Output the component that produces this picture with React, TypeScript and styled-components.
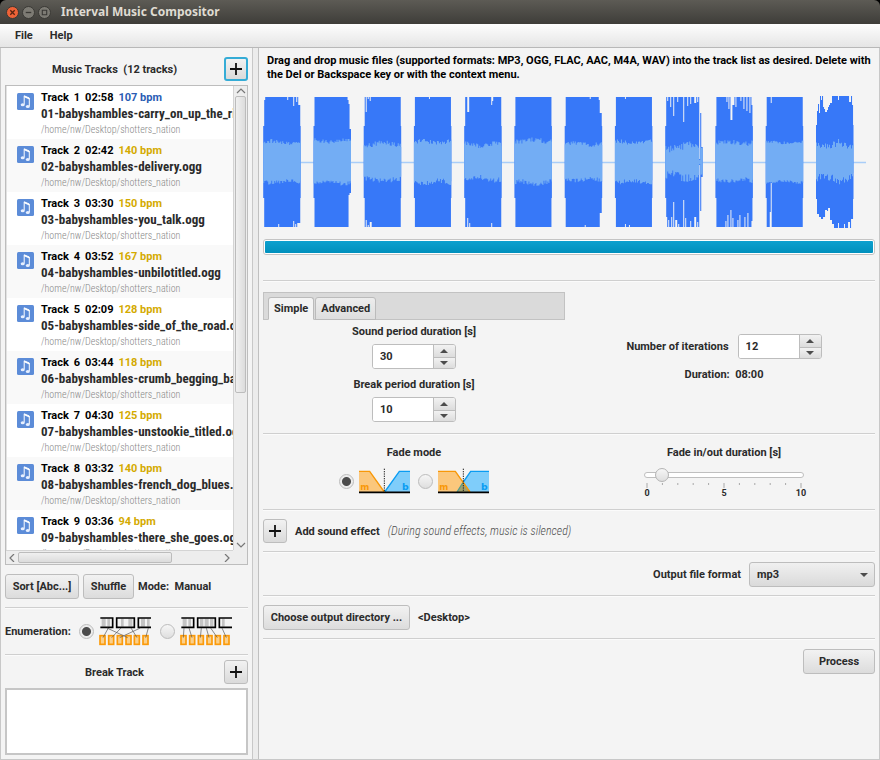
import React, { useState } from "react";
import styled, { createGlobalStyle, css } from "styled-components";

const GlobalStyle = createGlobalStyle`
  * { box-sizing: border-box; }
  body { margin: 0; background: #f4f4f4; }
  body, button, input, select {
    font-family: Roboto, "Liberation Sans", sans-serif;
    font-size: 11px;
    font-weight: 700;
    color: #2b2b2b;
  }
  button, input, select { margin: 0; }
`;

const condensed = css`
  font-family: "Roboto Condensed", "Liberation Sans Narrow", Roboto, sans-serif;
`;

const Window = styled.div`
  display: flex;
  flex-direction: column;
  height: 100vh;
  background: #000;
`;

const TitleBar = styled.header`
  display: flex;
  align-items: center;
  flex: none;
  gap: 3px;
  height: 24px;
  padding: 0 6px;
  border-radius: 6px 6px 0 0;
  background: linear-gradient(#5d5b55, #3e3d39);
`;

const WindowButton = styled.button<{ $close?: boolean }>`
  display: flex;
  width: 13px;
  height: 13px;
  padding: 0;
  border: 1px solid #3a3935;
  border-radius: 50%;
  background: ${(p) => (p.$close ? "#ee6237" : "#7d7b74")};
`;

const Title = styled.h1`
  margin: 0 0 0 7px;
  font: 700 12px/16px "Noto Sans", sans-serif;
  color: #dfdbd2;
`;

const MenuBar = styled.nav`
  display: flex;
  flex: none;
  gap: 17px;
  height: 24px;
  padding: 0 15px;
  border-bottom: 1px solid #b8b8b8;
  background: linear-gradient(#fdfdfd, #e5e5e5);
`;

const MenuItem = styled.button`
  padding: 0;
  border: 0;
  background: none;
`;

const Body = styled.div`
  display: grid;
  flex: 1;
  grid-template-columns: 253px 6px minmax(0, 1fr);
  min-height: 0;
  border-bottom: 1px solid #c8c8c8;
`;

const Sidebar = styled.aside`
  display: flex;
  flex-direction: column;
  min-height: 0;
  padding: 9px 4px 4px;
  border: solid #c8c8c8;
  border-width: 0 1px;
  background: #f4f4f4;
`;

const Splitter = styled.div`
  border-right: 1px solid #c0c0c0;
  background: #ececec;
`;

const Main = styled.main`
  padding: 6px 4px;
  border-right: 1px solid #c8c8c8;
  background: #f4f4f4;
`;

const SideHeader = styled.div`
  display: flex;
  align-items: center;
  flex: none;
  height: 24px;
`;

const SideTitle = styled.h2`
  flex: 1;
  margin: 0;
  font-size: 11px;
  text-align: center;
  white-space: pre;
`;

const Button = styled.button<{ $width?: number }>`
  height: 25px;
  width: ${(p) => (p.$width ? `${p.$width}px` : "auto")};
  padding: 0;
  border: 1px solid #bdbdbd;
  border-radius: 3px;
  background: linear-gradient(#f2f2f2, #dcdcdc);
  white-space: nowrap;
`;

const PlusButton = styled.button<{ $focused?: boolean }>`
  display: flex;
  align-items: center;
  justify-content: center;
  flex: none;
  width: 24px;
  height: 24px;
  padding: 0;
  border: ${(p) => (p.$focused ? "2px solid #35acd6" : "1px solid #bdbdbd")};
  border-radius: 3px;
  background: linear-gradient(#f2f2f2, #dadada);
`;

const ListFrame = styled.div`
  display: grid;
  flex: 1;
  grid-template-columns: minmax(0, 1fr) 14px;
  grid-template-rows: minmax(0, 1fr) 14px;
  min-height: 0;
  margin-top: 4px;
  border: 1px solid #bdbdbd;
  background: #ededed;
`;

const TrackList = styled.ul`
  overflow: hidden;
  margin: 0;
  padding: 0;
  border-left: 1px solid #e2e2e2;
  background: #fff;
  list-style: none;
`;

const TrackRow = styled.li`
  display: flex;
  gap: 7px;
  height: 53px;
  padding: 4px 0 0 10px;
  background: #fff;
  white-space: nowrap;
  &:nth-child(even) { background: #f9f9f9; }
`;

const NoteIcon = styled.svg`
  flex: none;
  width: 17px;
  height: 17px;
  margin-top: 3px;
`;

const TrackHead = styled.div`
  display: flex;
  gap: 5px;
  color: #000;
  font-size: 11px;
  line-height: 16px;
`;

const Bpm = styled.span<{ $slow?: boolean }>`
  color: ${(p) => (p.$slow ? "#2a5cb4" : "#d4aa00")};
`;

const FileName = styled.div`
  ${condensed}
  font-size: 13px;
  line-height: 16px;
`;

const FilePath = styled.div`
  ${condensed}
  color: #888;
  font-size: 10px;
  font-weight: 300;
  line-height: 15px;
`;

const ScrollBar = styled.div<{ $row?: boolean }>`
  display: flex;
  flex-direction: ${(p) => (p.$row ? "row" : "column")};
  align-items: center;
  justify-content: space-between;
  padding: ${(p) => (p.$row ? "0 1px" : "1px 0")};
  border: solid #d4d4d4;
  border-width: ${(p) => (p.$row ? "1px 0 0" : "0 0 0 1px")};
`;

const ScrollTrack = styled.div`
  display: flex;
  flex: 1;
  align-self: stretch;
  padding: 1px;
`;

const ScrollThumb = styled.div<{ $row?: boolean }>`
  width: ${(p) => (p.$row ? "76%" : "100%")};
  height: ${(p) => (p.$row ? "100%" : "67%")};
  border: 1px solid #bcbcbc;
  border-radius: 2px;
  background: linear-gradient(${(p) => (p.$row ? "180deg" : "90deg")}, #f0f0f0, #dcdcdc);
`;

const ActionRow = styled.div`
  display: flex;
  align-items: center;
  flex: none;
  gap: 4px;
  margin-top: 9px;
`;

const Rule = styled.hr<{ $above?: number; $below?: number }>`
  flex: none;
  width: 100%;
  height: 2px;
  margin: ${(p) => p.$above ?? 8}px 0 ${(p) => p.$below ?? 8}px;
  border: 0;
  border-top: 1px solid #cfcfcf;
  background: #fbfbfb;
`;

const RadioRow = styled.div`
  display: flex;
  align-items: center;
  flex: none;
  gap: 8px;
`;

const RadioLabel = styled.label`
  display: flex;
  align-items: center;
  gap: 5px;
`;

const Radio = styled.input`
  appearance: none;
  width: 15px;
  height: 15px;
  border: 1px solid #bcbcbc;
  border-radius: 50%;
  background: linear-gradient(#f6f6f6, #dedede);
  &:checked {
    background: radial-gradient(circle, #4c4c4c 0 4px, #ececec 5px);
  }
`;

const BreakBox = styled.div`
  flex: none;
  height: 67px;
  margin-top: 4px;
  border: 2px solid #c6c6c6;
  background: #fff;
`;

const Hint = styled.p`
  margin: 0 4px;
  color: #000;
  line-height: 14px;
`;

const WaveSvg = styled.svg`
  display: block;
  width: 100%;
  height: 136px;
  margin-top: 13px;
`;

const Progress = styled.div`
  height: 16px;
  margin-top: 8px;
  padding: 1px;
  border: 1px solid #c4c4c4;
  border-radius: 3px;
  background: #fff;
`;

const ProgressFill = styled.div`
  height: 100%;
  border-radius: 1px;
  background: linear-gradient(#0da0cf, #0090bd);
`;

const Columns = styled.div`
  display: grid;
  grid-template-columns: 1fr 1fr;
  gap: 8px;
`;

const TabBar = styled.div`
  display: flex;
  align-items: flex-end;
  gap: 1px;
  height: 28px;
  padding: 0 4px;
  border: 1px solid #c2c2c2;
  background: #dadada;
`;

const Tab = styled.button<{ $active?: boolean }>`
  height: 23px;
  margin-bottom: -1px;
  padding: 0 5px;
  border: 1px solid #bbb;
  border-bottom-color: ${(p) => (p.$active ? "#f4f4f4" : "#bbb")};
  border-radius: 3px 3px 0 0;
  background: ${(p) => (p.$active ? "#f4f4f4" : "linear-gradient(#ededed, #dedede)")};
`;

const Fields = styled.div`
  display: flex;
  flex-direction: column;
  align-items: center;
  gap: 8px;
  padding: 4px 0 3px;
`;

const Field = styled.div`
  display: flex;
  flex-direction: column;
  align-items: center;
  gap: 4px;
`;

const InlineField = styled.div`
  display: flex;
  align-items: center;
  gap: 9px;
`;

const FieldLabel = styled.label`
  line-height: 16px;
`;

const SpinnerBox = styled.div`
  display: flex;
  width: 84px;
  height: 25px;
  overflow: hidden;
  border: 1px solid #bdbdbd;
  border-radius: 3px;
  background: #fff;
`;

const SpinnerInput = styled.input`
  flex: 1;
  min-width: 0;
  padding: 0 7px;
  border: 0;
  outline: 0;
`;

const SpinnerButtons = styled.div`
  display: grid;
  grid-template-rows: 1fr 1fr;
  width: 22px;
  border-left: 1px solid #bdbdbd;
`;

const Step = styled.button`
  display: flex;
  align-items: center;
  justify-content: center;
  padding: 0;
  border: 0;
  background: linear-gradient(#f2f2f2, #dcdcdc);
  & + & { border-top: 1px solid #bdbdbd; }
`;

const RightColumn = styled.div`
  display: flex;
  flex-direction: column;
  align-items: center;
  padding-top: 42px;
`;

const Duration = styled.p`
  margin: 8px 0 0;
  line-height: 16px;
  white-space: pre;
`;

const FadeCell = styled.div`
  display: flex;
  flex-direction: column;
  align-items: center;
  gap: 9px;
  padding: 3px 0 2px;
`;

const SliderBox = styled.div`
  width: 160px;
`;

const SliderTop = styled.div`
  display: grid;
  align-items: center;
  & > * { grid-area: 1 / 1; }
`;

const Rail = styled.div`
  height: 6px;
  border: 1px solid #bfbfbf;
  border-radius: 3px;
  background: #fff;
`;

const Slider = styled.input`
  display: block;
  appearance: none;
  width: 168px;
  height: 14px;
  margin: 0 -4px;
  background: none;
  &::-webkit-slider-thumb {
    appearance: none;
    width: 14px;
    height: 14px;
    border: 1px solid #b4b4b4;
    border-radius: 50%;
    background: linear-gradient(#f6f6f6, #dedede);
  }
`;

const Ticks = styled.svg`
  display: block;
  width: 100%;
  height: 6px;
`;

const Scale = styled.div`
  display: grid;
  grid-template-columns: 12px 1fr 12px;
  margin: 0 -3px;
  font-size: 9px;
  line-height: 11px;
  text-align: center;
`;

const EffectNote = styled.em`
  ${condensed}
  color: #505050;
  font-size: 12px;
  font-weight: 300;
`;

const Line = styled.div<{ $end?: boolean }>`
  display: flex;
  align-items: center;
  justify-content: ${(p) => (p.$end ? "flex-end" : "flex-start")};
  gap: 8px;
`;

const SelectBox = styled.div`
  display: grid;
  align-items: center;
  & > * { grid-area: 1 / 1; }
  & > svg { justify-self: end; margin-right: 7px; pointer-events: none; }
`;

const Select = styled.select`
  appearance: none;
  width: 126px;
  height: 25px;
  padding: 0 7px;
  border: 1px solid #bdbdbd;
  border-radius: 3px;
  background: linear-gradient(#f0f0f0, #dadada);
`;

type Track = { file: string; time: string; bpm: number };

const tracks: Track[] = [
  { file: "01-babyshambles-carry_on_up_the_rising.ogg", time: "02:58", bpm: 107 },
  { file: "02-babyshambles-delivery.ogg", time: "02:42", bpm: 140 },
  { file: "03-babyshambles-you_talk.ogg", time: "03:30", bpm: 150 },
  { file: "04-babyshambles-unbilotitled.ogg", time: "03:52", bpm: 167 },
  { file: "05-babyshambles-side_of_the_road.ogg", time: "02:09", bpm: 128 },
  { file: "06-babyshambles-crumb_begging_baghead.ogg", time: "03:44", bpm: 118 },
  { file: "07-babyshambles-unstookie_titled.ogg", time: "04:30", bpm: 125 },
  { file: "08-babyshambles-french_dog_blues.ogg", time: "03:32", bpm: 140 },
  { file: "09-babyshambles-there_she_goes.ogg", time: "03:36", bpm: 94 },
];

/* A notch is [offset from the block's start, width, depth]. */
type Notch = [number, number, number];
type Block = { amp: number; vary: number; top: Notch[]; bottom: Notch[]; over?: number };

const blocks: Block[] = [
  { amp: 19, vary: 4, top: [[0, 2, 3], [24, 1, 3], [30, 1, 9], [33, 1, 5], [35, 2, 8]], bottom: [[15, 1, 3], [30, 1, 6], [32, 1, 3], [34, 3, 4]] },
  { amp: 20, vary: 4, top: [[34, 1, 3], [35, 1, 7], [36, 2, 32]], bottom: [[35, 1, 32], [36, 2, 34]] },
  { amp: 17, vary: 5, top: [[0, 1, 4], [2, 1, 15], [4, 1, 2], [6, 1, 4]], bottom: [[0, 1, 5], [2, 1, 7], [4, 1, 2], [6, 2, 5]] },
  { amp: 19, vary: 5, top: [[15, 1, 2]], bottom: [] },
  { amp: 16, vary: 5, top: [[0, 1, 8], [3, 2, 15], [27, 1, 8], [28, 1, 4]], bottom: [[0, 1, 2], [3, 1, 9], [5, 1, 4], [27, 1, 4]] },
  { amp: 20, vary: 5, top: [], bottom: [] },
  { amp: 17, vary: 4, top: [[25, 1, 2], [34, 1, 3], [35, 2, 16]], bottom: [[20, 1, 2], [35, 2, 14]] },
  { amp: 19, vary: 4, top: [[10, 1, 2]], bottom: [[10, 1, 3], [14, 1, 2]] },
  { amp: 13, vary: 8, top: [[0, 1, 8], [2, 1, 4], [5, 1, 10], [8, 1, 19], [12, 1, 5], [18, 1, 25], [22, 1, 9], [25, 1, 7], [29, 2, 6], [32, 1, 5], [34, 1, 62], [35, 1, 16], [36, 2, 50]], bottom: [[0, 2, 10], [3, 1, 7], [6, 1, 10], [8, 1, 25], [10, 2, 7], [13, 1, 3], [18, 1, 27], [20, 1, 9], [25, 1, 6], [29, 2, 10], [32, 1, 5], [34, 1, 62], [35, 1, 16], [36, 2, 50]] },
  { amp: 18, vary: 5, top: [[11, 1, 5], [13, 1, 12], [15, 2, 23], [17, 2, 8], [20, 1, 10], [25, 1, 4], [28, 1, 12], [31, 1, 14], [34, 1, 16], [36, 1, 8]], bottom: [[10, 1, 6], [12, 1, 12], [15, 1, 17], [17, 1, 9], [22, 1, 7], [24, 1, 12], [29, 1, 10], [32, 1, 14], [36, 1, 6]] },
  { amp: 19, vary: 3, top: [[5, 1, 6]], bottom: [[4, 1, 15], [5, 1, 44]] },
  { amp: 15, vary: 8, over: 1, top: [[0, 2, 15], [2, 1, 8], [3, 1, 17], [5, 1, 4], [7, 1, 11], [8, 1, 13], [9, 2, 16], [11, 1, 14], [12, 1, 11], [13, 1, 9], [14, 2, 7], [22, 1, 4], [33, 2, 6], [36, 2, 9]], bottom: [[0, 1, 22], [1, 2, 14], [3, 2, 11], [5, 2, 9], [7, 2, 11], [9, 2, 18], [11, 1, 17], [12, 2, 20], [14, 2, 8], [16, 2, 4], [22, 1, 5], [28, 1, 4], [32, 2, 6], [35, 2, 9]] },
];

const MID = 67;

function notchDepth(list: Notch[], x: number) {
  return list.reduce((d, [at, w, depth]) => (x >= at && x < at + w ? Math.max(d, depth) : d), 0);
}

function wavePaths(block: Block, index: number) {
  const start = index * 50.25 + 0.2;
  let seed = index * 977 + 131;
  const random = () => {
    seed = (seed * 1103515245 + 12345) % 2147483648;
    return seed / 2147483648;
  };
  let loud = "";
  let soft = "";
  for (let i = 0; i < 38; i += 1) {
    const x = (start + i).toFixed(1);
    const full = 65 + (block.over ?? 0);
    const edge = i === 0 || i === 37 ? 29 : 0;
    const up = Math.max(2, full - Math.max(edge, notchDepth(block.top, i)));
    const down = Math.max(2, full - Math.max(edge, notchDepth(block.bottom, i)));
    const width = i === 37 ? 0.5 : 1.05;
    loud += `M${x} ${MID - up}h${width}v${up + down}h-${width}z`;
    const wander = Math.sin(i / 5 + index * 2) * block.vary * 0.25;
    const a = Math.min(up - 1, block.amp + wander + random() * block.vary - block.vary / 4);
    const b = Math.min(down - 1, block.amp + wander + random() * block.vary - block.vary / 3);
    soft += `M${x} ${(MID - a).toFixed(1)}h${width}v${(a + b).toFixed(1)}h-${width}z`;
  }
  return { loud, soft };
}

function Waveform() {
  return (
    <WaveSvg viewBox="0 0 612 136" preserveAspectRatio="none" aria-label="Waveform">
      <path d="M0 67.5H603" stroke="#a9cdf8" strokeWidth="1.4" />
      {blocks.map((block, i) => {
        const { loud, soft } = wavePaths(block, i);
        return (
          <g key={i}>
            <path d={loud} fill="#3778f8" />
            <path d={soft} fill="#73adf4" />
          </g>
        );
      })}
    </WaveSvg>
  );
}

function Plus() {
  return (
    <svg width="14" height="14" viewBox="0 0 14 14" aria-hidden="true">
      <path d="M7 1v12M1 7h12" stroke="#111" strokeWidth="1.8" />
    </svg>
  );
}

function Note() {
  return (
    <NoteIcon viewBox="0 0 17 17" aria-hidden="true">
      <rect width="17" height="17" rx="1.5" fill="#5c8cd8" />
      <path d="M7.2 11.5V2.8L12.3 5v8" fill="none" stroke="#fff" strokeWidth="1" />
      <path d="M7.2 2.8l5.1 2.2v1.5l-5.1-2.2z" fill="#fff" />
      <ellipse cx="5.7" cy="11.8" rx="2" ry="1.5" fill="#e8f0ff" />
      <ellipse cx="10.8" cy="13.5" rx="2" ry="1.5" fill="#e8f0ff" />
    </NoteIcon>
  );
}

const chevrons = {
  up: "M1 6l4-4 4 4",
  down: "M1 2l4 4 4-4",
  left: "M7 0L3 4l4 4",
  right: "M3 0l4 4-4 4",
};

function Chevron({ to }: { to: keyof typeof chevrons }) {
  return (
    <svg width="10" height="8" viewBox="0 0 10 8" aria-hidden="true">
      <path d={chevrons[to]} fill="none" stroke="#777" strokeWidth="1.2" />
    </svg>
  );
}

function Triangle({ down }: { down?: boolean }) {
  return (
    <svg width="8" height="4" viewBox="0 0 8 4" aria-hidden="true">
      <path d={down ? "M0 0h8L4 4z" : "M0 4h8L4 0z"} fill="#4c4c4c" />
    </svg>
  );
}

type Link = [number, number];

function EnumerationIcon({ links, stripes }: { links: Link[]; stripes: Link[] }) {
  return (
    <svg width="53" height="30" viewBox="0 0 159 90" aria-hidden="true">
      {stripes.map(([x, w]) => (
        <rect key={x} x={x} y="8" width={w} height="24" fill="#c4c4c4" />
      ))}
      <g fill="none" stroke="#000" strokeWidth="5">
        <path d="M4 6h37v28H4M53 6h53v28H53zM156 6h-38v28h38" />
      </g>
      {[3, 29, 55, 81, 106, 132].map((x) => (
        <rect key={x} x={x} y="59" width="15" height="26" fill="#fbd08b" stroke="#fb9a09" strokeWidth="5" />
      ))}
      <g stroke="#555" strokeWidth="2">
        {links.map(([from, to]) => (
          <path key={from} d={`M${from} 36L${to} 65`} />
        ))}
      </g>
    </svg>
  );
}

function FadeIcon({ cross }: { cross?: boolean }) {
  const o = cross ? 20 : 0;
  return (
    <svg width="51" height="26" viewBox="0 0 153 78" aria-hidden="true">
      <path d={`M0 10H${cross ? 52 : 32}L${76 + o} 72H0z`} fill="#fbc77c" />
      <path d={`M153 10H${cross ? 98 : 121}L${77 - o} 72H153z`} fill="#7fcdfa" />
      {cross && <path d="M76 41L97 72H57z" fill="#a2a06c" />}
      {cross && <path d="M57 72L76 42" stroke="#549c8c" strokeWidth="4" />}
      <path d={`M153 10H${cross ? 98 : 121}L${cross ? 76 : 77} ${cross ? 42 : 72}`} fill="none" stroke="#0a9cf2" strokeWidth="4" />
      <path d={`M0 10H${cross ? 52 : 32}L${76 + o} 72`} fill="none" stroke="#f89808" strokeWidth="4" />
      <path d="M76 2V72" stroke="#222" strokeWidth="3" strokeDasharray="4 3" />
      <path d="M0 73H153" stroke="#000" strokeWidth="5" />
      <text x="4" y="66" fill="#f89808" fontFamily="DejaVu Sans" fontWeight="700" fontSize="26">m</text>
      <text x="129" y="66" fill="#0a9cf2" fontFamily="DejaVu Sans" fontWeight="700" fontSize="28">b</text>
    </svg>
  );
}

function Spinner({ id, initial }: { id: string; initial: number }) {
  const [value, setValue] = useState(initial);
  return (
    <SpinnerBox>
      <SpinnerInput id={id} value={value} inputMode="numeric" onChange={(e) => setValue(Number(e.target.value) || 0)} />
      <SpinnerButtons>
        <Step aria-label="Increase" onClick={() => setValue(value + 1)}><Triangle /></Step>
        <Step aria-label="Decrease" onClick={() => setValue(value - 1)}><Triangle down /></Step>
      </SpinnerButtons>
    </SpinnerBox>
  );
}

export default function App() {
  return (
    <>
      <GlobalStyle />
      <Window>
        <TitleBar>
          <WindowButton $close aria-label="Close">
            <svg viewBox="0 0 10 10"><path d="M3 3l4 4M7 3L3 7" stroke="#5a2410" strokeWidth="1.2" /></svg>
          </WindowButton>
          <WindowButton aria-label="Minimize">
            <svg viewBox="0 0 10 10"><path d="M2.5 5h5" stroke="#3a3935" strokeWidth="1.2" /></svg>
          </WindowButton>
          <WindowButton aria-label="Maximize">
            <svg viewBox="0 0 10 10"><path d="M3 3h4v4H3z" fill="none" stroke="#3a3935" /></svg>
          </WindowButton>
          <Title>Interval Music Compositor</Title>
        </TitleBar>
        <MenuBar>
          <MenuItem>File</MenuItem>
          <MenuItem>Help</MenuItem>
        </MenuBar>
        <Body>
          <Sidebar>
            <SideHeader>
              <SideTitle>{"Music Tracks  (12 tracks)"}</SideTitle>
              <PlusButton $focused aria-label="Add music track"><Plus /></PlusButton>
            </SideHeader>
            <ListFrame>
              <TrackList>
                {tracks.map((t, i) => (
                  <TrackRow key={t.file}>
                    <Note />
                    <div>
                      <TrackHead>
                        <span>Track</span>
                        <span>{i + 1}</span>
                        <span>{t.time}</span>
                        <Bpm $slow={i === 0}>{t.bpm} bpm</Bpm>
                      </TrackHead>
                      <FileName>{t.file}</FileName>
                      <FilePath>/home/nw/Desktop/shotters_nation</FilePath>
                    </div>
                  </TrackRow>
                ))}
              </TrackList>
              <ScrollBar>
                <Chevron to="up" />
                <ScrollTrack><ScrollThumb /></ScrollTrack>
                <Chevron to="down" />
              </ScrollBar>
              <ScrollBar $row>
                <Chevron to="left" />
                <ScrollTrack><ScrollThumb $row /></ScrollTrack>
                <Chevron to="right" />
              </ScrollBar>
            </ListFrame>
            <ActionRow>
              <Button $width={74}>Sort [Abc...]</Button>
              <Button $width={51}>Shuffle</Button>
              <span>Mode:&nbsp; Manual</span>
            </ActionRow>
            <Rule $below={7} />
            <RadioRow>
              <span>Enumeration:</span>
              <RadioLabel>
                <Radio type="radio" name="enumeration" defaultChecked aria-label="Mixed order" />
                <EnumerationIcon
                  stripes={[[8, 12], [25, 8], [66, 8], [88, 12], [126, 12], [144, 8]]}
                  links={[[28, 12], [24, 86], [66, 38], [96, 114], [124, 62], [148, 140]]}
                />
              </RadioLabel>
              <RadioLabel>
                <Radio type="radio" name="enumeration" aria-label="Track order" />
                <EnumerationIcon
                  stripes={[[8, 12], [25, 8], [60, 10], [74, 12], [90, 10], [126, 8]]}
                  links={[[12, 10], [27, 36], [64, 61], [79, 87], [92, 112], [126, 139]]}
                />
              </RadioLabel>
            </RadioRow>
            <Rule $below={4} />
            <SideHeader>
              <SideTitle>Break Track</SideTitle>
              <PlusButton aria-label="Add break track"><Plus /></PlusButton>
            </SideHeader>
            <BreakBox />
          </Sidebar>
          <Splitter />
          <Main>
            <Hint>
              Drag and drop music files (supported formats: MP3, OGG, FLAC, AAC, M4A, WAV) into the track list as
              desired. Delete with the Del or Backspace key or with the context menu.
            </Hint>
            <Waveform />
            <Progress role="progressbar" aria-valuenow={100}><ProgressFill /></Progress>
            <Rule $above={25} $below={10} />
            <Columns>
              <div>
                <TabBar role="tablist">
                  <Tab role="tab" $active aria-selected>Simple</Tab>
                  <Tab role="tab" aria-selected={false}>Advanced</Tab>
                </TabBar>
                <Fields>
                  <Field>
                    <FieldLabel htmlFor="sound">Sound period duration [s]</FieldLabel>
                    <Spinner id="sound" initial={30} />
                  </Field>
                  <Field>
                    <FieldLabel htmlFor="break">Break period duration [s]</FieldLabel>
                    <Spinner id="break" initial={10} />
                  </Field>
                </Fields>
              </div>
              <RightColumn>
                <InlineField>
                  <FieldLabel htmlFor="iterations">Number of iterations</FieldLabel>
                  <Spinner id="iterations" initial={12} />
                </InlineField>
                <Duration>{"Duration:  08:00"}</Duration>
              </RightColumn>
            </Columns>
            <Rule />
            <Columns>
              <FadeCell>
                <span>Fade mode</span>
                <RadioRow>
                  <RadioLabel>
                    <Radio type="radio" name="fade" defaultChecked aria-label="Fade out, then in" />
                    <FadeIcon />
                  </RadioLabel>
                  <RadioLabel>
                    <Radio type="radio" name="fade" aria-label="Cross fade" />
                    <FadeIcon cross />
                  </RadioLabel>
                </RadioRow>
              </FadeCell>
              <FadeCell>
                <label htmlFor="fade">Fade in/out duration [s]</label>
                <SliderBox>
                  <SliderTop>
                    <Rail />
                    <Slider id="fade" type="range" min={0} max={10} defaultValue={1} />
                  </SliderTop>
                  <Ticks viewBox="0 0 160 6" aria-hidden="true">
                    {Array.from({ length: 11 }, (_, i) => (
                      <path key={i} d={`M${3 + i * 15.4} 1v${i % 5 ? 2 : 5}`} stroke="#a8a8a8" />
                    ))}
                  </Ticks>
                  <Scale><span>0</span><span>5</span><span>10</span></Scale>
                </SliderBox>
              </FadeCell>
            </Columns>
            <Rule />
            <Line>
              <PlusButton aria-label="Add sound effect"><Plus /></PlusButton>
              <span>Add sound effect</span>
              <EffectNote>(During sound effects, music is silenced)</EffectNote>
            </Line>
            <Rule $below={9} />
            <Line $end>
              <label htmlFor="format">Output file format</label>
              <SelectBox>
                <Select id="format" defaultValue="mp3">
                  <option>mp3</option>
                  <option>ogg</option>
                </Select>
                <Triangle down />
              </SelectBox>
            </Line>
            <Rule />
            <Line>
              <Button $width={147}>Choose output directory ...</Button>
              <span>&lt;Desktop&gt;</span>
            </Line>
            <Rule $below={9} />
            <Line $end>
              <Button $width={72}>Process</Button>
            </Line>
          </Main>
        </Body>
      </Window>
    </>
  );
}
